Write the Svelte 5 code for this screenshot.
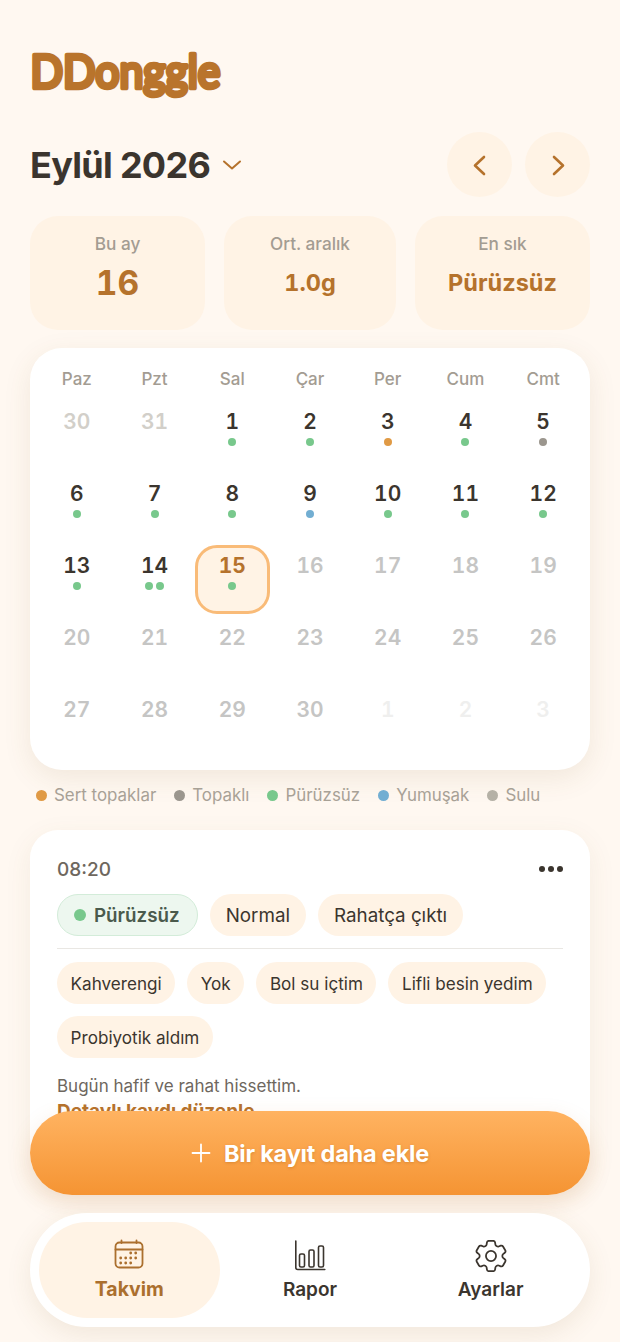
<script lang="ts">
	interface Day {
		n: number;
		kind: 'past' | 'done' | 'future' | 'next';
		dots: string[];
		today?: boolean;
	}

	const colors = {
		hard: '#e09a45',
		lumpy: '#9b968e',
		smooth: '#78c88c',
		soft: '#72aed2',
		watery: '#b5b1a6'
	};

	const weekdays = ['Paz', 'Pzt', 'Sal', 'Çar', 'Per', 'Cum', 'Cmt'];

	const legend = [
		{ label: 'Sert topaklar', color: colors.hard },
		{ label: 'Topaklı', color: colors.lumpy },
		{ label: 'Pürüzsüz', color: colors.smooth },
		{ label: 'Yumuşak', color: colors.soft },
		{ label: 'Sulu', color: colors.watery }
	];

	const logged: Record<number, string[]> = {
		1: [colors.smooth],
		2: [colors.smooth],
		3: [colors.hard],
		4: [colors.smooth],
		5: [colors.lumpy],
		6: [colors.smooth],
		7: [colors.smooth],
		8: [colors.smooth],
		9: [colors.soft],
		10: [colors.smooth],
		11: [colors.smooth],
		12: [colors.smooth],
		13: [colors.smooth],
		14: [colors.smooth, colors.smooth],
		15: [colors.smooth]
	};

	const days: Day[] = [
		{ n: 30, kind: 'past', dots: [] },
		{ n: 31, kind: 'past', dots: [] }
	];
	for (let n = 1; n <= 30; n++) {
		days.push({ n, kind: n <= 15 ? 'done' : 'future', dots: logged[n] ?? [], today: n === 15 });
	}
	for (let n = 1; n <= 3; n++) days.push({ n, kind: 'next', dots: [] });

	const stats = [
		{ label: 'Bu ay', value: '16', big: true },
		{ label: 'Ort. aralık', value: '1.0g' },
		{ label: 'En sık', value: 'Pürüzsüz' }
	];

	const tagsTop = ['Normal', 'Rahatça çıktı'];
	const tagsBottom = ['Kahverengi', 'Yok', 'Bol su içtim', 'Lifli besin yedim', 'Probiyotik aldım'];

	// calendar icon dots, as [x, y]
	const calDots = [
		[17.7, 14], [22.7, 14],
		[7.7, 19], [12.7, 19], [17.7, 19], [22.7, 19],
		[7.7, 24], [12.7, 24], [17.7, 24]
	];
</script>

<div class="screen">
	<main>
		<h1 class="logo">
			<svg width="240" height="64" viewBox="0 0 240 64"><text transform="scale(0.95 1.05)" x="0.500" y="45.500">DDonggle</text></svg>
		</h1>

		<div class="month-row">
			<button class="month">
				<span>Eylül 2026</span>
				<svg width="22" height="22" viewBox="0 0 22 22" fill="none" stroke="#b5722c" stroke-width="2" stroke-linecap="round" stroke-linejoin="round"><path d="M3 7.500 11 14.500 19 7.500" /></svg>
			</button>
			<div class="arrows">
				<button class="arrow" aria-label="Önceki ay">
					<svg width="24" height="24" viewBox="0 0 24 24" fill="none" stroke="#b5722c" stroke-width="2.600" stroke-linecap="round" stroke-linejoin="round"><path d="M16 4 7 12.500 16 21" /></svg>
				</button>
				<button class="arrow" aria-label="Sonraki ay">
					<svg width="24" height="24" viewBox="0 0 24 24" fill="none" stroke="#b5722c" stroke-width="2.600" stroke-linecap="round" stroke-linejoin="round"><path d="M8 4 17 12.500 8 21" /></svg>
				</button>
			</div>
		</div>

		<div class="stats">
			{#each stats as s}
				<div class="stat">
					<div class="stat-label">{s.label}</div>
					<div class="stat-value" class:big={s.big}>{s.value}</div>
				</div>
			{/each}
		</div>

		<section class="calendar">
			<div class="weekdays">
				{#each weekdays as w}
					<div>{w}</div>
				{/each}
			</div>
			<div class="grid">
				{#each days as d}
					<div class="day {d.kind}" class:today={d.today}>
						<span class="num">{d.n}</span>
						<span class="dots">
							{#each d.dots as c}
								<i style="background: {c}"></i>
							{/each}
						</span>
					</div>
				{/each}
			</div>
		</section>

		<div class="legend">
			{#each legend as l}
				<span class="legend-item"><i style="background: {l.color}"></i>{l.label}</span>
			{/each}
		</div>

		<section class="entry">
			<div class="entry-head">
				<span class="time">08:20</span>
				<span class="more"><i></i><i></i><i></i></span>
			</div>
			<div class="tags top">
				<span class="tag smooth"><i></i>Pürüzsüz</span>
				{#each tagsTop as t}
					<span class="tag">{t}</span>
				{/each}
			</div>
			<div class="divider"></div>
			<div class="tags">
				{#each tagsBottom as t}
					<span class="tag">{t}</span>
				{/each}
			</div>
			<p class="note">Bugün hafif ve rahat hissettim.</p>
			<div class="edit">Detaylı kaydı düzenle</div>
		</section>
	</main>

	<div class="dock">
		<button class="add">
			<svg width="20" height="20" viewBox="0 0 20 20" fill="none" stroke="#fff" stroke-width="1.800" stroke-linecap="round"><path d="M10 1.500v17M1.500 10h17" /></svg>
			<span>Bir kayıt daha ekle</span>
		</button>

		<nav>
			<div class="tab active">
				<svg width="32" height="32" viewBox="0 0 32 32" fill="none" stroke="currentColor" stroke-width="1.800" stroke-linecap="round">
					<rect x="2.500" y="3.500" width="27" height="25" rx="4" />
					<path d="M2.500 10.500h27M8.500 1.500v2.500M23.500 1.500v2.500" />
					<g fill="currentColor" stroke="none">
						{#each calDots as [x, y]}
							<circle cx={x} cy={y} r="1.400" />
						{/each}
					</g>
				</svg>
				<span>Takvim</span>
			</div>
			<div class="tab">
				<svg width="32" height="32" viewBox="0 0 32 32" fill="none" stroke="currentColor" stroke-width="1.600" stroke-linecap="round" stroke-linejoin="round">
					<path d="M1.800 1v26.500a2 2 0 0 0 2 2h27" />
					<rect x="5.500" y="14" width="5" height="13" rx="1.500" />
					<rect x="15" y="10" width="5" height="17" rx="1.500" />
					<rect x="24.500" y="6" width="5" height="21" rx="1.500" />
				</svg>
				<span>Rapor</span>
			</div>
			<div class="tab">
				<svg width="32" height="32" viewBox="2.500 2.500 19 19" fill="none" stroke="currentColor" stroke-width="1.050" stroke-linecap="round" stroke-linejoin="round">
					<path d="M9.594 3.94c.09-.542.56-.94 1.110-.94h2.593c.55 0 1.020.398 1.110.94l.213 1.281c.063.374.313.686.645.870.074.040.147.083.220.127.325.196.720.257 1.075.124l1.217-.456a1.125 1.125 0 0 1 1.370.490l1.296 2.247a1.125 1.125 0 0 1-.260 1.431l-1.003.827c-.293.241-.438.613-.430.992a7.723 7.723 0 0 1 0 .255c-.008.378.137.750.430.991l1.004.827c.424.350.534.955.260 1.430l-1.298 2.247a1.125 1.125 0 0 1-1.369.491l-1.217-.456c-.355-.133-.750-.072-1.076.124a6.470 6.470 0 0 1-.220.128c-.331.183-.581.495-.644.869l-.213 1.281c-.090.543-.560.940-1.110.940h-2.594c-.550 0-1.019-.398-1.110-.940l-.213-1.281c-.062-.374-.312-.686-.644-.870a6.520 6.520 0 0 1-.220-.127c-.325-.196-.720-.257-1.076-.124l-1.217.456a1.125 1.125 0 0 1-1.369-.490l-1.297-2.247a1.125 1.125 0 0 1 .260-1.431l1.004-.827c.292-.240.437-.613.430-.991a6.932 6.932 0 0 1 0-.255c.007-.380-.138-.751-.430-.992l-1.004-.827a1.125 1.125 0 0 1-.260-1.430l1.297-2.247a1.125 1.125 0 0 1 1.370-.491l1.216.456c.356.133.751.072 1.076-.124.072-.044.146-.086.220-.128.332-.183.582-.495.644-.869l.214-1.280Z" />
					<circle cx="12" cy="12" r="3" />
				</svg>
				<span>Ayarlar</span>
			</div>
		</nav>
	</div>
</div>

<style>
	:global(body) {
		margin: 0;
		background: #fff8f1;
	}

	.screen {
		position: relative;
		width: 620px;
		height: 1342px;
		overflow: hidden;
		background: #fff8f1;
		font-family: Inter, 'Noto Sans', sans-serif;
		color: #3b352e;
	}

	main {
		padding: 40px 30px 0;
	}

	button {
		font: inherit;
		color: inherit;
		border: none;
		background: none;
		padding: 0;
	}

	.logo {
		margin: 0;
		height: 64px;
		font-size: 0;
	}

	.logo svg {
		display: block;
	}

	.logo text {
		font-family: Lato, sans-serif;
		font-weight: 400;
		font-size: 45px;
		letter-spacing: 0;
		fill: #b9742c;
		stroke: #b9742c;
		stroke-width: 4.500px;
		stroke-linejoin: round;
		stroke-linecap: round;
	}

	.month-row {
		display: flex;
		align-items: center;
		justify-content: space-between;
		margin-top: 28px;
	}

	.month {
		display: flex;
		align-items: center;
		gap: 11px;
		font-size: 36px;
		font-weight: 700;
		letter-spacing: -0.7px;
	}

	.arrows {
		display: flex;
		gap: 13px;
	}

	.arrow {
		display: flex;
		align-items: center;
		justify-content: center;
		width: 65px;
		height: 65px;
		border-radius: 50%;
		background: #fff3e5;
	}

	.stats {
		display: grid;
		grid-template-columns: 175px 172px 175px;
		justify-content: space-between;
		margin-top: 19px;
	}

	.stat {
		height: 114px;
		box-sizing: border-box;
		padding-top: 18px;
		border-radius: 28px;
		background: #fff3e5;
		text-align: center;
	}

	.stat-label {
		font-size: 17.200px;
		line-height: 20px;
		font-weight: 500;
		color: #a39c92;
	}

	.stat-value {
		margin-top: 8px;
		height: 42px;
		font-size: 23.500px;
		line-height: 42px;
		font-weight: 700;
		font-variant-numeric: tabular-nums;
		color: #b5722c;
	}

	.stat-value.big {
		font-size: 33.500px;
	}

	.calendar {
		margin-top: 18px;
		padding: 20px 8px 12px;
		border-radius: 32px;
		background: #fff;
		box-shadow: 0 8px 28px rgba(120, 85, 40, 0.1);
	}

	.weekdays {
		display: grid;
		grid-template-columns: repeat(7, 1fr);
		text-align: center;
		font-size: 17px;
		line-height: 22px;
		font-weight: 500;
		color: #a39c92;
	}

	.grid {
		display: grid;
		grid-template-columns: repeat(7, 1fr);
		row-gap: 3px;
		margin-top: 11px;
	}

	.day {
		height: 69px;
		box-sizing: border-box;
		display: flex;
		flex-direction: column;
		align-items: center;
		margin: 0 1.500px;
		padding-top: 5px;
		border: 3px solid transparent;
		border-radius: 22px;
	}

	.num {
		font-size: 21px;
		line-height: 26px;
		font-weight: 600;
		font-variant-numeric: tabular-nums;
	}

	.past .num {
		color: #d2cfc9;
	}

	.future .num {
		color: #c5c5c4;
	}

	.next .num {
		color: #efefee;
	}

	.today {
		background: #fff3e5;
		border-color: #f9bb78;
	}

	.today .num {
		color: #b5722c;
		font-weight: 700;
	}

	.dots {
		display: flex;
		gap: 3px;
		margin-top: 3px;
	}

	.dots i {
		width: 8px;
		height: 8px;
		border-radius: 50%;
	}

	.legend {
		display: flex;
		gap: 18px;
		margin-top: 13px;
		padding-left: 6px;
		font-size: 16.900px;
		line-height: 24px;
		color: #a8a196;
	}

	.legend-item {
		display: flex;
		align-items: center;
		gap: 7px;
	}

	.legend-item i {
		width: 11px;
		height: 11px;
		border-radius: 50%;
	}

	.entry {
		margin-top: 23px;
		padding: 26px 27px 60px;
		border-radius: 28px;
		background: #fff;
		box-shadow: 0 8px 28px rgba(120, 85, 40, 0.08);
	}

	.entry-head {
		display: flex;
		align-items: center;
		justify-content: space-between;
		height: 26px;
	}

	.time {
		font-size: 19px;
		font-weight: 500;
		color: #6e675e;
	}

	.more {
		display: flex;
		gap: 3px;
	}

	.more i {
		width: 6px;
		height: 6px;
		border-radius: 50%;
		background: #3b352e;
	}

	.tags {
		display: flex;
		flex-wrap: wrap;
		gap: 12px;
	}

	.tags.top {
		margin-top: 12px;
	}

	.tag {
		display: flex;
		align-items: center;
		height: 42px;
		box-sizing: border-box;
		padding: 0 13.600px;
		border-radius: 21px;
		background: #fff3e5;
		font-size: 17.100px;
		color: #3b352e;
	}

	.tags.top .tag {
		padding: 0 16px;
		font-size: 18.800px;
	}

	.tags.top .tag.smooth {
		gap: 8px;
		padding: 0 17px 0 16px;
		background: #edf7ef;
		border: 1px solid #d3ecd9;
		font-weight: 600;
		color: #4a5a4c;
	}

	.tag.smooth i {
		width: 12px;
		height: 12px;
		border-radius: 50%;
		background: #78c88c;
	}

	.divider {
		height: 1px;
		margin: 12px 0 13px;
		background: #e9e7e3;
	}

	.note {
		margin: 16px 0 0;
		font-size: 17px;
		line-height: 24px;
		color: #6e675e;
	}

	.edit {
		margin-top: 2px;
		font-size: 19px;
		line-height: 24px;
		font-weight: 700;
		color: #b5722c;
	}

	.dock {
		position: absolute;
		left: 30px;
		right: 30px;
		top: 1111px;
		display: flex;
		flex-direction: column;
		gap: 18px;
	}

	.add {
		display: flex;
		align-items: center;
		justify-content: center;
		gap: 13px;
		height: 84px;
		border-radius: 42px;
		background: linear-gradient(180deg, #ffb361 0%, #f59433 100%);
		box-shadow: 0 8px 22px rgba(200, 130, 60, 0.18);
		color: #fff;
		font-size: 23.500px;
		font-weight: 700;
		letter-spacing: -0.2px;
		text-shadow: 0 1px 3px rgba(150, 80, 10, 0.3);
	}

	nav {
		display: grid;
		grid-template-columns: repeat(3, 1fr);
		height: 114px;
		box-sizing: border-box;
		padding: 9px;
		border-radius: 57px;
		background: #fff;
		box-shadow: 0 8px 26px rgba(120, 85, 40, 0.1);
	}

	.tab {
		display: flex;
		flex-direction: column;
		align-items: center;
		justify-content: center;
		gap: 6px;
		border-radius: 48px;
		font-size: 19px;
		font-weight: 600;
		color: #3b352e;
	}

	.tab.active {
		background: #fff3e5;
		color: #ab6f2e;
		font-size: 19.500px;
		font-weight: 700;
	}
</style>
